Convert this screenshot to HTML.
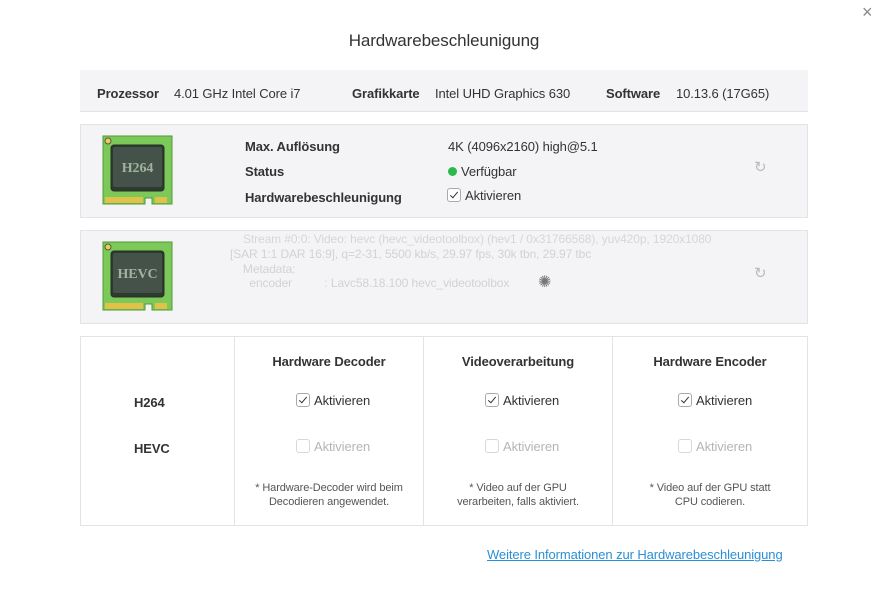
<!DOCTYPE html>
<html><head><meta charset="utf-8"><style>
*{margin:0;padding:0;box-sizing:border-box}
body{width:888px;height:591px;background:#fff;font-family:"Liberation Sans",Arial,sans-serif;color:#333;position:relative;overflow:hidden;font-size:13px;letter-spacing:-0.1px}
.a{position:absolute;white-space:nowrap}
.b{font-weight:bold;color:#333}
.box{position:absolute;left:80px;width:728px;background:#f4f4f6;border:1px solid #e3e3e6}
.cb{display:inline-block;width:14px;height:14px;border:1px solid #a9a9ad;border-radius:3px;background:#fff;vertical-align:-2px;margin-right:4px;position:relative}
.cb.on::after{content:"";position:absolute;left:4px;top:1px;width:3px;height:7px;border:solid #333;border-width:0 1.5px 1.5px 0;transform:rotate(40deg)}
.cb.off{border-color:#d8d8da}
.dis{color:#b5b5b8}
.c{position:absolute;text-align:center;white-space:nowrap}
.vl{position:absolute;top:337px;height:188px;width:1px;background:#e3e3e6}
.note{font-size:11px;color:#555;line-height:14px}
</style></head><body>
<div class="a" style="left:862px;top:2px;font-size:18px;color:#888">×</div>
<div class="a" style="left:0;width:888px;text-align:center;top:31px;font-size:17px;color:#333">Hardwarebeschleunigung</div>

<div class="box" style="top:70px;height:42px;border-top:none;border-left:none;border-right:none"></div>
<div class="a b" style="left:97px;top:86px">Prozessor</div>
<div class="a" style="left:174px;top:86px">4.01 GHz Intel Core i7</div>
<div class="a b" style="left:352px;top:86px">Grafikkarte</div>
<div class="a" style="left:435px;top:86px">Intel UHD Graphics 630</div>
<div class="a b" style="left:606px;top:86px">Software</div>
<div class="a" style="left:676px;top:86px">10.13.6 (17G65)</div>

<div class="box" style="top:124px;height:94px"></div>
<svg class="a" style="left:100px;top:135px" width="75" height="74" viewBox="0 0 75 74">
<path d="M3 1h69v68h-20v-6h-7v6H3z" fill="#7cc95a" stroke="#4f9a36"/>
<circle cx="8" cy="6" r="3" fill="#e8d24a" stroke="#555"/>
<rect x="11" y="10" width="53" height="46" rx="3" fill="#2f3a2f" stroke="#243024"/>
<rect x="13" y="12" width="49" height="40" rx="2" fill="#44524a"/>
<text x="37.5" y="37" font-family="Liberation Serif,serif" font-weight="bold" font-size="14" fill="#9fb39f" text-anchor="middle">H264</text>
<rect x="5" y="62" width="38" height="6" fill="#e0c24a"/><rect x="55" y="62" width="12" height="6" fill="#e0c24a"/>
</svg>
<div class="a b" style="left:245px;top:139px">Max. Auflösung</div>
<div class="a b" style="left:245px;top:164px">Status</div>
<div class="a b" style="left:245px;top:190px">Hardwarebeschleunigung</div>
<div class="a" style="left:448px;top:139px">4K (4096x2160) high@5.1</div>
<div class="a" style="left:448px;top:164px"><span style="display:inline-block;width:9px;height:9px;border-radius:50%;background:#2db84a;margin-right:4px"></span>Verfügbar</div>
<div class="a" style="left:447px;top:188px"><span class="cb on"></span>Aktivieren</div>
<div class="a" style="left:754px;top:158px;color:#bbb;font-size:15px">↻</div>

<div class="box" style="top:230px;height:94px;overflow:hidden">
<div class="a" style="left:162px;top:1px;color:#d6d6d8;font-size:12px;line-height:14px">Stream #0:0: Video: hevc (hevc_videotoolbox) (hev1 / 0x31766568), yuv420p, 1920x1080</div>
</div>
<div class="a" style="left:230px;top:247px;color:#d2d2d4;font-size:12px;line-height:14.5px">[SAR 1:1 DAR 16:9], q=2-31, 5500 kb/s, 29.97 fps, 30k tbn, 29.97 tbc<br>&nbsp;&nbsp;&nbsp;&nbsp;Metadata:<br>&nbsp;&nbsp;&nbsp;&nbsp;&nbsp;&nbsp;encoder &nbsp;&nbsp;&nbsp;&nbsp;&nbsp;&nbsp;&nbsp;&nbsp;&nbsp;: Lavc58.18.100 hevc_videotoolbox</div>
<div class="a" style="left:538px;top:272px;color:#777;font-size:16px">✺</div>
<svg class="a" style="left:100px;top:241px" width="75" height="74" viewBox="0 0 75 74">
<path d="M3 1h69v68h-20v-6h-7v6H3z" fill="#7cc95a" stroke="#4f9a36"/>
<circle cx="8" cy="6" r="3" fill="#e8d24a" stroke="#555"/>
<rect x="11" y="10" width="53" height="46" rx="3" fill="#2f3a2f" stroke="#243024"/>
<rect x="13" y="12" width="49" height="40" rx="2" fill="#44524a"/>
<text x="37.5" y="37" font-family="Liberation Serif,serif" font-weight="bold" font-size="14" fill="#9fb39f" text-anchor="middle">HEVC</text>
<rect x="5" y="62" width="38" height="6" fill="#e0c24a"/><rect x="55" y="62" width="12" height="6" fill="#e0c24a"/>
</svg>
<div class="a" style="left:754px;top:264px;color:#bbb;font-size:15px">↻</div>

<div style="position:absolute;left:80px;top:336px;width:728px;height:190px;border:1px solid #e3e3e6"></div>
<div class="vl" style="left:234px"></div><div class="vl" style="left:423px"></div><div class="vl" style="left:612px"></div>
<div class="a b" style="left:134px;top:395px">H264</div>
<div class="a b" style="left:134px;top:441px">HEVC</div>

<div class="c b" style="left:235px;width:188px;top:354px">Hardware Decoder</div>
<div class="c b" style="left:424px;width:188px;top:354px">Videoverarbeitung</div>
<div class="c b" style="left:613px;width:194px;top:354px">Hardware Encoder</div>

<div class="a" style="left:296px;top:393px"><span class="cb on"></span>Aktivieren</div>
<div class="a" style="left:485px;top:393px"><span class="cb on"></span>Aktivieren</div>
<div class="a" style="left:678px;top:393px"><span class="cb on"></span>Aktivieren</div>
<div class="a dis" style="left:296px;top:439px"><span class="cb off"></span>Aktivieren</div>
<div class="a dis" style="left:485px;top:439px"><span class="cb off"></span>Aktivieren</div>
<div class="a dis" style="left:678px;top:439px"><span class="cb off"></span>Aktivieren</div>

<div class="c note" style="left:235px;width:188px;top:481px">* Hardware-Decoder wird beim<br>Decodieren angewendet.</div>
<div class="c note" style="left:424px;width:188px;top:481px">* Video auf der GPU<br>verarbeiten, falls aktiviert.</div>
<div class="c note" style="left:613px;width:194px;top:481px">* Video auf der GPU statt<br>CPU codieren.</div>

<div class="a" style="left:487px;top:547px;color:#2a8fd6;text-decoration:underline">Weitere Informationen zur Hardwarebeschleunigung</div>
</body></html>
